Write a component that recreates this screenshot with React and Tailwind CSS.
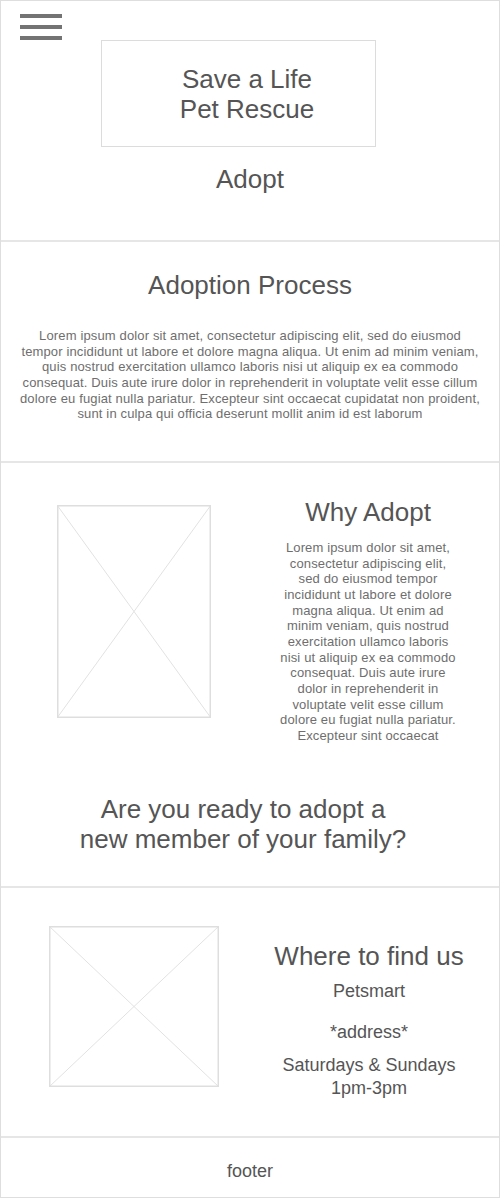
import React from "react";

const FONT = { fontFamily: '"Liberation Sans", Arial, Helvetica, sans-serif' };

function Placeholder({ w, h, className }) {
  return (
    <svg width={w} height={h} viewBox={`0 0 ${w} ${h}`} className={className}>
      <line x1="0" y1="0" x2={w} y2={h} stroke="#e2e2e2" strokeWidth="1" />
      <line x1={w} y1="0" x2="0" y2={h} stroke="#e2e2e2" strokeWidth="1" />
      <rect x="0.75" y="0.75" width={w - 1.5} height={h - 1.5} fill="none" stroke="#dedede" strokeWidth="1.5" />
    </svg>
  );
}

const LOREM =
  "Lorem ipsum dolor sit amet, consectetur adipiscing elit, sed do eiusmod tempor incididunt ut labore et dolore magna aliqua. Ut enim ad minim veniam, quis nostrud exercitation ullamco laboris nisi ut aliquip ex ea commodo consequat. Duis aute irure dolor in reprehenderit in voluptate velit esse cillum dolore eu fugiat nulla pariatur. Excepteur sint occaecat cupidatat non proident, sunt in culpa qui officia deserunt mollit anim id est laborum";

const LOREM_SHORT =
  "Lorem ipsum dolor sit amet, consectetur adipiscing elit, sed do eiusmod tempor incididunt ut labore et dolore magna aliqua. Ut enim ad minim veniam, quis nostrud exercitation ullamco laboris nisi ut aliquip ex ea commodo consequat. Duis aute irure dolor in reprehenderit in voluptate velit esse cillum dolore eu fugiat nulla pariatur. Excepteur sint occaecat";

export default function App() {
  return (
    <div
      style={FONT}
      className="w-[500px] h-[1198px] border border-[#dedede] bg-white flex flex-col text-[#555555]"
    >
      {/* Header */}
      <header className="h-[241px] border-b-2 border-[#e6e6e6] pt-[13px]">
        <div className="ml-[19px] w-[42px] flex flex-col gap-[7px]">
          <div className="h-[4px] bg-[#737373]" />
          <div className="h-[4px] bg-[#737373]" />
          <div className="h-[4px] bg-[#737373]" />
        </div>
        <div className="ml-[100px] w-[275px] h-[107px] border border-[#dcdcdc] flex items-center justify-center pl-[17px]">
          <div className="text-[26px] leading-[30px] text-center">
            Save a Life
            <br />
            Pet Rescue
          </div>
        </div>
        <div className="mt-[17px] text-[26px] leading-[30px] text-center">Adopt</div>
      </header>

      {/* Adoption Process */}
      <section className="h-[221px] border-b-2 border-[#e6e6e6] pt-[28px]">
        <h2 className="text-[26px] leading-[30px] text-center">Adoption Process</h2>
        <p className="mt-[28px] w-[462px] mx-auto text-[13px] leading-[15.67px] tracking-[0.14px] text-center text-[#6e6e6e]">
          {LOREM}
        </p>
      </section>

      {/* Why Adopt */}
      <section className="h-[425px] border-b-2 border-[#e6e6e6] pt-[34px]">
        <div className="flex items-start">
          <Placeholder w={154} h={213} className="ml-[56px] mt-[8px] shrink-0" />
          <div className="ml-[57px] w-[200px] shrink-0">
            <h2 className="text-[26px] leading-[30px] text-center">Why Adopt</h2>
            <p className="mt-[13px] w-[178px] mx-auto text-[13px] leading-[15.67px] tracking-[0.14px] text-center text-[#6e6e6e]">
              {LOREM_SHORT}
            </p>
          </div>
        </div>
        <div className="mt-[50px] pr-[14px] text-[26px] leading-[30px] text-center">
          Are you ready to adopt a
          <br />
          new member of your family?
        </div>
      </section>

      {/* Where to find us */}
      <section className="h-[250px] border-b-2 border-[#e6e6e6]">
        <div className="flex items-start">
          <Placeholder w={170} h={161} className="ml-[48px] mt-[38px] shrink-0" />
          <div className="ml-[50px] mt-[53px] w-[200px] shrink-0 text-center">
            <h2 className="text-[26px] leading-[30px] whitespace-nowrap">Where to find us</h2>
            <div className="mt-[9px] text-[18px] leading-[23px]">Petsmart</div>
            <div className="mt-[18px] text-[18px] leading-[23px]">*address*</div>
            <div className="mt-[10px] text-[18px] leading-[23px]">
              Saturdays &amp; Sundays
              <br />
              1pm-3pm
            </div>
          </div>
        </div>
      </section>

      {/* Footer */}
      <footer className="flex-1 pt-[22px] text-[18px] leading-[23px] text-center">footer</footer>
    </div>
  );
}
